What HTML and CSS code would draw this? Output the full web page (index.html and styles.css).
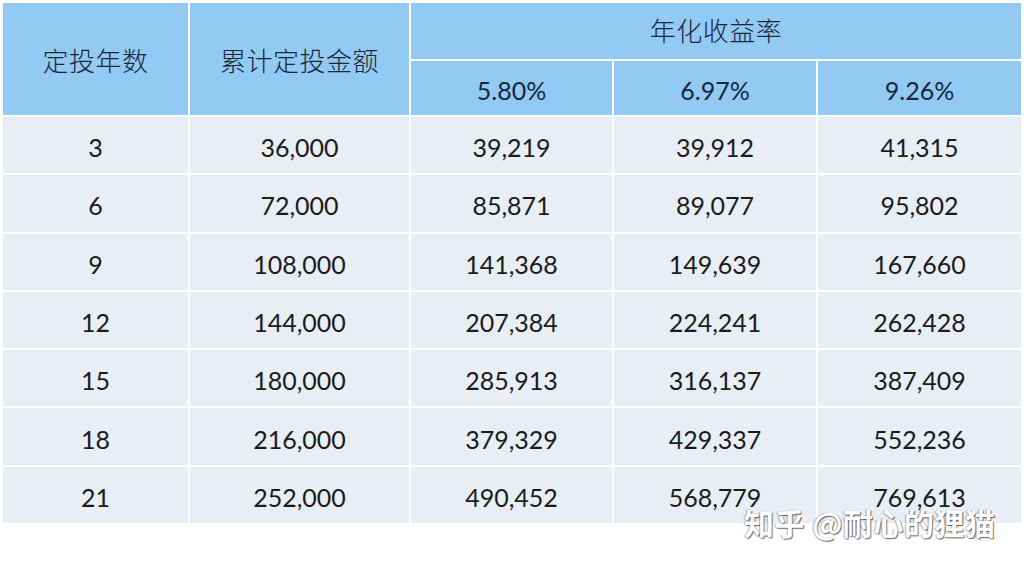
FILE: index.html
```html
<!DOCTYPE html>
<html lang="zh">
<head>
<meta charset="utf-8">
<link rel="stylesheet" href="styles.css">
</head>
<body>
<div class="page">
  <table class="grid">
    <colgroup>
      <col class="c1"><col class="c2"><col class="c3"><col class="c4"><col class="c5">
    </colgroup>
    <thead>
      <tr class="h1">
        <th rowspan="2" class="cjk">定投年数</th>
        <th rowspan="2" class="cjk">累计定投金额</th>
        <th colspan="3" class="cjk top">年化收益率</th>
      </tr>
      <tr class="h2">
        <th>5.80%</th><th>6.97%</th><th>9.26%</th>
      </tr>
    </thead>
    <tbody>
      <tr><td>3</td><td>36,000</td><td>39,219</td><td>39,912</td><td>41,315</td></tr>
      <tr><td>6</td><td>72,000</td><td>85,871</td><td>89,077</td><td>95,802</td></tr>
      <tr><td>9</td><td>108,000</td><td>141,368</td><td>149,639</td><td>167,660</td></tr>
      <tr><td>12</td><td>144,000</td><td>207,384</td><td>224,241</td><td>262,428</td></tr>
      <tr><td>15</td><td>180,000</td><td>285,913</td><td>316,137</td><td>387,409</td></tr>
      <tr><td>18</td><td>216,000</td><td>379,329</td><td>429,337</td><td>552,236</td></tr>
      <tr><td>21</td><td>252,000</td><td>490,452</td><td>568,779</td><td>769,613</td></tr>
    </tbody>
  </table>
  <div class="watermark">知乎 @耐心的狸猫</div>
</div>
</body>
</html>
```

FILE: styles.css
```css
html, body {
  margin: 0;
  padding: 0;
  background: #ffffff;
}
.page {
  position: relative;
  width: 1024px;
  height: 566px;
  padding: 1px 0 0 1px;
  box-sizing: border-box;
}
.grid {
  border-collapse: separate;
  border-spacing: 2px;
  table-layout: fixed;
  width: 1022px;
  font-family: Lato, "Noto Sans CJK SC", sans-serif;
  font-size: 25px;
  color: #1b1b1b;
}
.c1 { width: 185px; }
.c2 { width: 219px; }
.c3 { width: 201px; }
.c4 { width: 202px; }
.c5 { width: 203px; }
th, td {
  padding: 0;
  text-align: center;
  vertical-align: middle;
}
th {
  background: #93caf3;
  font-weight: 400;
  color: #16273a;
}
.h1 th { height: 56px; }
.h1 th.top { padding-bottom: 4px; box-sizing: border-box; }
.h2 th { height: 54px; padding-top: 4px; box-sizing: border-box; }
.cjk {
  font-family: "Noto Sans CJK SC", sans-serif;
  font-size: 26px;
  font-weight: 300;
  letter-spacing: 0.5px;
}
td {
  background: #e9edf4;
  height: 56.3px;
  padding-top: 4px;
  box-sizing: border-box;
}
.watermark {
  position: absolute;
  left: 744px;
  top: 500px;
  font-family: "Noto Sans CJK SC", sans-serif;
  font-size: 30px;
  font-weight: 700;
  color: #ffffff;
  letter-spacing: 0.5px;
  text-shadow: 1px 1px 1px rgba(0,0,0,0.6), -1px 0 1px rgba(0,0,0,0.3);
  white-space: nowrap;
}
```
